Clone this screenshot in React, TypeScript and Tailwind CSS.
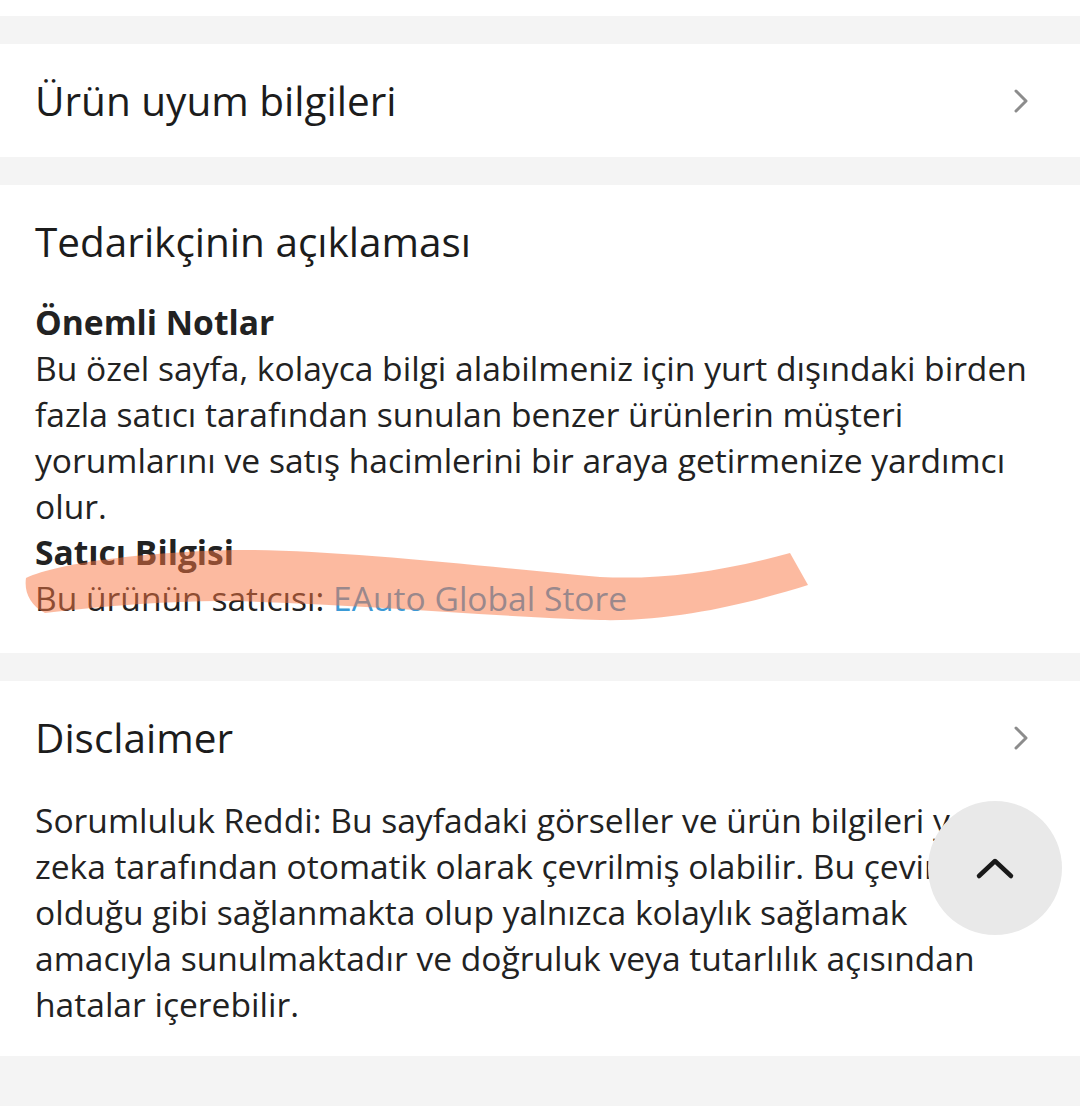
import React from "react";

const Chevron = () => (
  <svg width="16" height="24" viewBox="0 0 16 24" className="shrink-0">
    <path d="M2 2 L12 12 L2 22" fill="none" stroke="#8c8c8c" strokeWidth="3" strokeLinecap="round" strokeLinejoin="round" />
  </svg>
);

export default function App() {
  return (
    <div
      className="relative w-[1080px] h-[1106px] bg-[#f4f4f4] overflow-hidden text-[#1c1c1c]"
      style={{ fontFamily: '"Open Sans", "Noto Sans", sans-serif' }}
    >
      <div className="h-[16px] bg-white" />
      <div className="h-[28px]" />

      {/* Card 1 */}
      <div className="bg-white h-[113px] pl-[35px] pr-[50px] flex items-center justify-between">
        <div className="text-[40.5px] leading-[46px] font-medium">Ürün uyum bilgileri</div>
        <Chevron />
      </div>

      <div className="h-[28px]" />

      {/* Card 2 */}
      <div className="relative bg-white h-[468px] px-[35px] pt-[34px]">
        <div className="text-[40.5px] leading-[46px] font-medium">Tedarikçinin açıklaması</div>
        <div className="mt-[34px] text-[33.6px] leading-[46px] text-[#222] whitespace-nowrap">
          <div className="font-bold">Önemli Notlar</div>
          <div>
            Bu özel sayfa, kolayca bilgi alabilmeniz için yurt dışındaki birden
            <br />
            fazla satıcı tarafından sunulan benzer ürünlerin müşteri
            <br />
            yorumlarını ve satış hacimlerini bir araya getirmenize yardımcı
            <br />
            olur.
          </div>
          <div className="font-bold">Satıcı Bilgisi</div>
          <div>
            Bu ürünün satıcısı: <span className="text-[#3b9ad6]">EAuto Global Store</span>
          </div>
        </div>
        <svg
          className="absolute left-0 top-0 pointer-events-none"
          width="1080"
          height="468"
          viewBox="0 185 1080 468"
        >
          <path
            d="M26 578 C 60 562, 150 552, 233 550 C 330 549, 480 566, 600 577 C 660 580, 720 572, 790 553 L 808 585 C 760 600, 680 622, 600 620 C 480 616, 360 604, 230 601 C 150 601, 90 608, 45 613 C 30 605, 24 592, 26 578 Z"
            fill="rgb(250,118,66)"
            fillOpacity="0.5"
          />
        </svg>
      </div>

      <div className="h-[28px]" />

      {/* Card 3 */}
      <div className="bg-white h-[375px] px-[35px] pt-[34px]">
        <div className="flex items-center justify-between pr-[15px]">
          <div className="text-[40.5px] leading-[46px] font-medium">Disclaimer</div>
          <Chevron />
        </div>
        <div className="mt-[36px] text-[33.6px] leading-[46px] text-[#222] whitespace-nowrap">
          Sorumluluk Reddi: Bu sayfadaki görseller ve ürün bilgileri yapay
          <br />
          zeka tarafından otomatik olarak çevrilmiş olabilir. Bu çeviri
          <br />
          olduğu gibi sağlanmakta olup yalnızca kolaylık sağlamak
          <br />
          amacıyla sunulmaktadır ve doğruluk veya tutarlılık açısından
          <br />
          hatalar içerebilir.
        </div>
      </div>

      {/* Scroll to top button */}
      <div className="absolute left-[928px] top-[801px] w-[134px] h-[134px] rounded-full bg-[#e9e9e9] flex items-center justify-center">
        <svg width="40" height="28" viewBox="0 0 40 28">
          <path d="M4 22 L20 7 L36 22" fill="none" stroke="#1a1a1a" strokeWidth="4.5" strokeLinecap="round" strokeLinejoin="round" />
        </svg>
      </div>
    </div>
  );
}
